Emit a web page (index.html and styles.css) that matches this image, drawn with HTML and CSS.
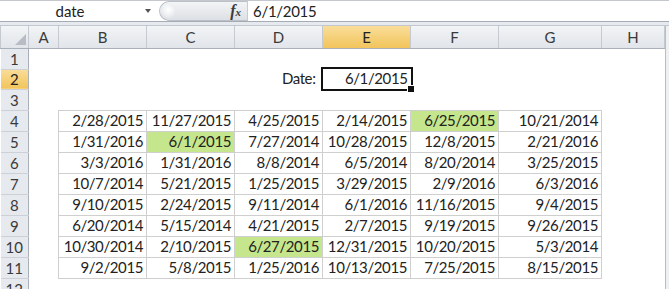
FILE: index.html
```html
<!DOCTYPE html>
<html lang="en">

<head>
    <meta charset="UTF-8">
    <title>Date lookup</title>
    <link rel="stylesheet" href="styles.css">
</head>

<body>
    <div class="fbar">
        <div class="namebox">
            <span class="name">date</span>
            <span class="drop"></span>
        </div>
        <div class="fxbox">
            <span class="knob"></span>
            <span class="fx"><i>f</i><small>x</small></span>
        </div>
        <div class="formula">6/1/2015</div>
    </div>
    <div class="band"></div>

    <div class="sheet-wrap">
        <table class="sheet">
            <colgroup>
                <col class="w-hd">
                <col class="w-a">
                <col class="w-std">
                <col class="w-std">
                <col class="w-std">
                <col class="w-std">
                <col class="w-std">
                <col class="w-g">
                <col class="w-h">
            </colgroup>
            <tr class="hd">
                <th class="corner"></th>
                <th>A</th><th>B</th><th>C</th><th>D</th><th class="sel">E</th><th>F</th><th>G</th><th>H</th>
            </tr>
            <tr>
                <th class="row">1</th>
                <td></td><td></td><td></td><td></td><td></td><td></td><td></td><td></td>
            </tr>
            <tr class="r2">
                <th class="row sel">2</th>
                <td></td><td></td><td></td><td class="label">Date:</td><td class="active">6/1/2015</td><td></td><td></td><td></td>
            </tr>
            <tr>
                <th class="row">3</th>
                <td></td><td></td><td></td><td></td><td></td><td></td><td></td><td></td>
            </tr>
            <tr>
                <th class="row">4</th>
                <td></td>
                <td class="g">2/28/2015</td><td class="g">11/27/2015</td><td class="g">4/25/2015</td>
                <td class="g">2/14/2015</td><td class="g hit">6/25/2015</td><td class="g">10/21/2014</td>
                <td></td>
            </tr>
            <tr>
                <th class="row">5</th>
                <td></td>
                <td class="g">1/31/2016</td><td class="g hit">6/1/2015</td><td class="g">7/27/2014</td>
                <td class="g">10/28/2015</td><td class="g">12/8/2015</td><td class="g">2/21/2016</td>
                <td></td>
            </tr>
            <tr>
                <th class="row">6</th>
                <td></td>
                <td class="g">3/3/2016</td><td class="g">1/31/2016</td><td class="g">8/8/2014</td>
                <td class="g">6/5/2014</td><td class="g">8/20/2014</td><td class="g">3/25/2015</td>
                <td></td>
            </tr>
            <tr>
                <th class="row">7</th>
                <td></td>
                <td class="g">10/7/2014</td><td class="g">5/21/2015</td><td class="g">1/25/2015</td>
                <td class="g">3/29/2015</td><td class="g">2/9/2016</td><td class="g">6/3/2016</td>
                <td></td>
            </tr>
            <tr>
                <th class="row">8</th>
                <td></td>
                <td class="g">9/10/2015</td><td class="g">2/24/2015</td><td class="g">9/11/2014</td>
                <td class="g">6/1/2016</td><td class="g">11/16/2015</td><td class="g">9/4/2015</td>
                <td></td>
            </tr>
            <tr>
                <th class="row">9</th>
                <td></td>
                <td class="g">6/20/2014</td><td class="g">5/15/2014</td><td class="g">4/21/2015</td>
                <td class="g">2/7/2015</td><td class="g">9/19/2015</td><td class="g">9/26/2015</td>
                <td></td>
            </tr>
            <tr>
                <th class="row">10</th>
                <td></td>
                <td class="g">10/30/2014</td><td class="g">2/10/2015</td><td class="g hit">6/27/2015</td>
                <td class="g">12/31/2015</td><td class="g">10/20/2015</td><td class="g">5/3/2014</td>
                <td></td>
            </tr>
            <tr>
                <th class="row">11</th>
                <td></td>
                <td class="g">9/2/2015</td><td class="g">5/8/2015</td><td class="g">1/25/2016</td>
                <td class="g">10/13/2015</td><td class="g">7/25/2015</td><td class="g">8/15/2015</td>
                <td></td>
            </tr>
            <tr>
                <th class="row">12</th>
                <td></td><td></td><td></td><td></td><td></td><td></td><td></td><td></td>
            </tr>
        </table>
        <div class="vscroll"></div>
    </div>
</body>

</html>
```

FILE: styles.css
```css
* {
    box-sizing: border-box;
}

body {
    margin: 0;
    height: 289px;
    overflow: hidden;
    background: #fff;
    color: #222;
    font-family: Lato, "Liberation Sans", sans-serif;
    font-size: 15px;
}

/* formula bar */
.fbar {
    display: flex;
    height: 22px;
    border-top: 1px solid #c4c8ce;
    border-bottom: 1px solid #a5acb6;
    background: #fff;
}

.namebox {
    width: 159px;
    display: flex;
    align-items: center;
}

.name {
    width: 140px;
    text-align: center;
    color: #222;
}

.drop {
    margin-left: 5px;
    border-left: 3px solid transparent;
    border-right: 3px solid transparent;
    border-top: 4px solid #555;
}

.fxbox {
    width: 88px;
    display: flex;
    align-items: center;
    padding: 0 6px 0 2px;
    border: 1px solid #bcc1c8;
    border-right: 0;
    border-radius: 11px 0 0 11px;
    background: linear-gradient(#f3f4f6, #dde0e4);
}

.knob {
    width: 14px;
    height: 14px;
    margin-right: auto;
    border-radius: 50%;
    background: radial-gradient(circle at 45% 40%, #fff 0, #f4f5f7 35%, #d9dce1 100%);
}

.fx {
    font-family: "Liberation Serif", serif;
    font-style: italic;
    font-weight: bold;
    color: #3b3b3b;
    font-size: 16px;
}

.fx small {
    font-size: 11px;
}

.formula {
    flex: 1;
    padding-left: 5px;
    border-left: 1px solid #c8ccd2;
    line-height: 20px;
    letter-spacing: -0.3px;
}

.band {
    height: 4px;
    background: #e6e9ed;
    border-bottom: 1px solid #c3c8cf;
}

/* grid */
.sheet-wrap {
    display: flex;
}

.sheet {
    border-collapse: collapse;
    table-layout: fixed;
    width: 664px;
}

.w-hd { width: 28px; }
.w-a { width: 30px; }
.w-std { width: 88px; }
.w-g { width: 103px; }
.w-h { width: 63px; }

.sheet tr {
    height: 21px;
}

.sheet tr.hd {
    height: 22px;
}

.sheet tr.r2 {
    height: 20px;
}

.sheet th {
    padding: 0;
    font-weight: normal;
    color: #3a3a3a;
    text-align: center;
    background: linear-gradient(#f2f4f6, #e1e4e9);
    border: 1px solid #c5cad1;
    border-top: 0;
    border-bottom-color: #a9b0ba;
}

.sheet th.corner {
    position: relative;
    border-right-color: #c5cad1;
}

.sheet th.corner::after {
    content: "";
    position: absolute;
    right: 2px;
    bottom: 3px;
    border-left: 11px solid transparent;
    border-bottom: 11px solid #b8bdc5;
}

.sheet th.row {
    background: #e6e9ed;
    border-left: 0;
    border-bottom-color: #cdd1d7;
    border-right-color: #a9b0ba;
}

.sheet th.sel {
    background: linear-gradient(#f9dd98, #f2c45c);
    color: #222;
}

.sheet td {
    padding: 0 3px 2px 0;
    text-align: right;
    vertical-align: bottom;
    white-space: nowrap;
    line-height: 18px;
    letter-spacing: -0.4px;
}

.sheet td.g {
    border: 1px solid #cfcfcf;
}

.sheet td.hit {
    background: #c5e68c;
}

.sheet td.label {
    padding-right: 7px;
}

.sheet td.active {
    position: relative;
    outline: 2px solid #111;
}

.sheet td.active::after {
    content: "";
    position: absolute;
    right: -4px;
    bottom: -4px;
    width: 6px;
    height: 6px;
    background: #111;
    border: 1px solid #fff;
}

.vscroll {
    width: 5px;
    background: #eef0f2;
    border-left: 1px solid #b9bec6;
}
```
